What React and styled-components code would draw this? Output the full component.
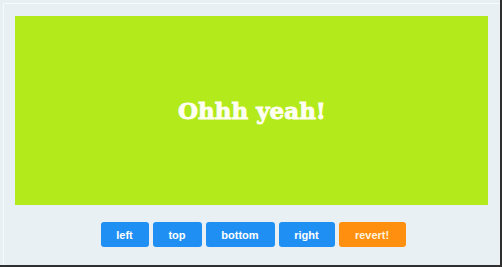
import React from "react";
import styled, { createGlobalStyle } from "styled-components";

const Global = createGlobalStyle`
  html, body { margin: 0; padding: 0; background: #e9f0f4; }
  * { box-sizing: border-box; }
`;

const Frame = styled.div`
  width: 502px;
  height: 267px;
  background: #e9f0f4;
  border-right: 2px solid #2f2f2f;
  border-bottom: 2px solid #2f2f2f;
  box-shadow: inset 3px 3px 0 #e9f0f4, inset 4px 4px 0 #f7fafc;
  padding: 16px 12px 0 15px;
  display: flex;
  flex-direction: column;
  align-items: stretch;
`;

const Stage = styled.div`
  height: 189px;
  background: #b3ea1c;
  display: flex;
  align-items: center;
  justify-content: center;
`;

const Title = styled.h1`
  margin: 0 0 1px 1px;
  font-family: "DejaVu Serif", "Liberation Serif", serif;
  font-weight: bold;
  font-size: 23px;
  color: #fffef2;
  -webkit-text-stroke: 0.9px #fffef2;
  letter-spacing: 0px;
`;

const Toolbar = styled.div`
  display: flex;
  justify-content: center;
  gap: 4px;
  margin-top: 17px;
  padding-left: 3px;
`;

const Button = styled.button`
  height: 25px;
  min-width: ${(p) => p.$w}px;
  padding: 0 12px;
  border: none;
  border-radius: 3px;
  background: ${(p) => (p.$accent ? "#ff8f0f" : "#1f8ff4")};
  color: ${(p) => (p.$accent ? "#fff3df" : "#ffffff")};
  font-family: "Liberation Sans", Arial, sans-serif;
  font-weight: bold;
  font-size: 11px;
  cursor: pointer;
`;

export default function App() {
  return (
    <>
      <Global />
      <Frame>
        <Stage>
          <Title>Ohhh yeah!</Title>
        </Stage>
        <Toolbar>
          <Button $w={48}>left</Button>
          <Button $w={49}>top</Button>
          <Button $w={69}>bottom</Button>
          <Button $w={56}>right</Button>
          <Button $w={67} $accent>revert!</Button>
        </Toolbar>
      </Frame>
    </>
  );
}
